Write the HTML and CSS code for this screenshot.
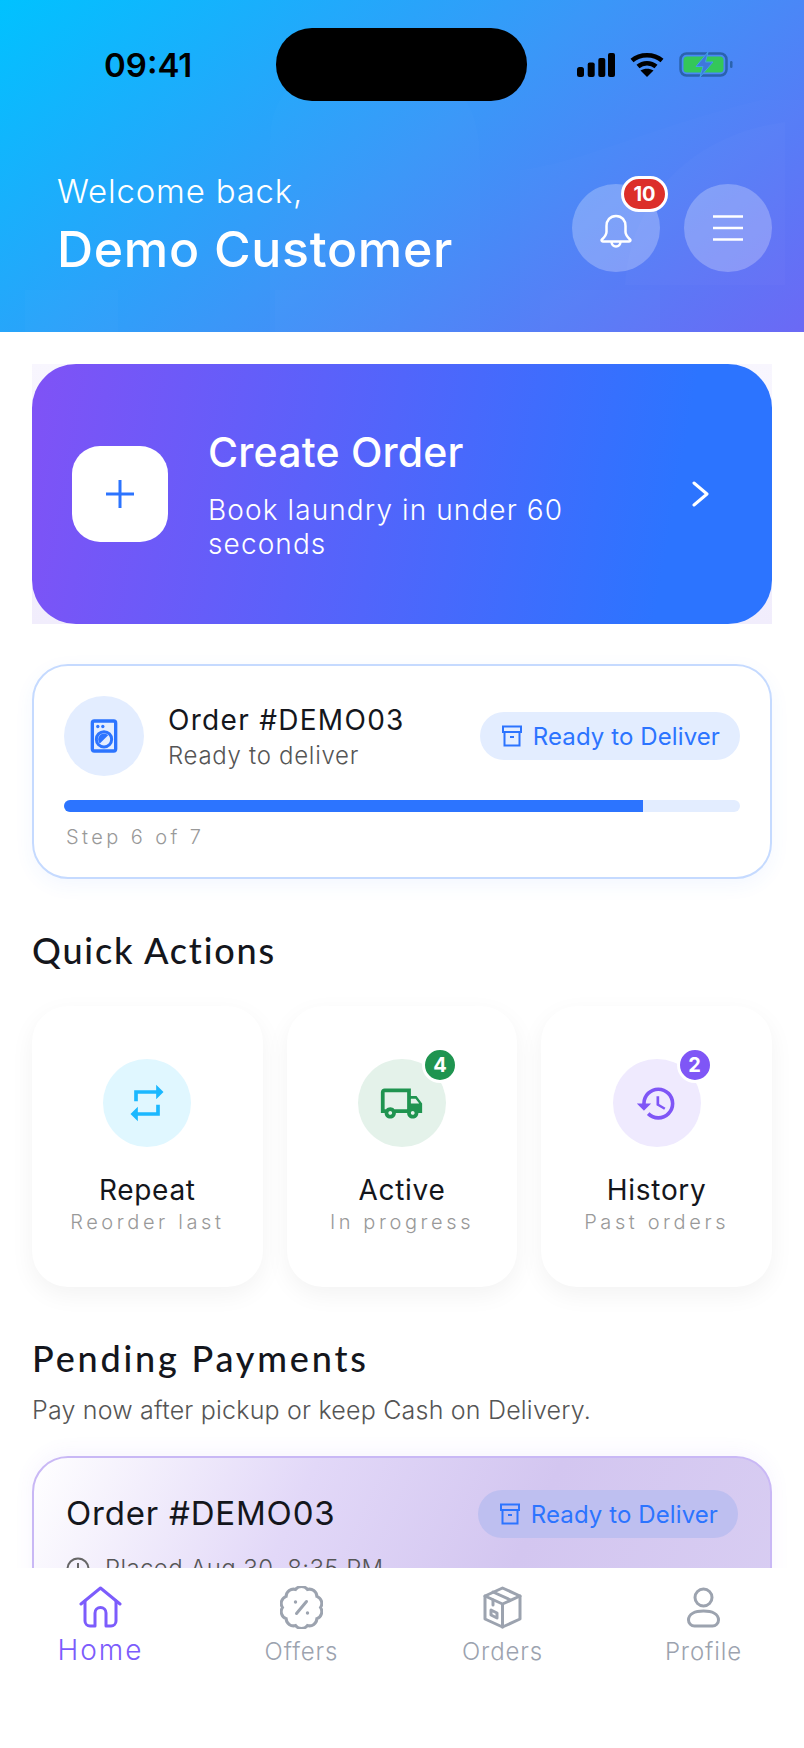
FILE: index.html
```html
<!DOCTYPE html>
<html lang="en">
<head>
    <meta charset="UTF-8">
    <meta name="viewport" content="width=device-width, initial-scale=1.0">
    <title>Customer Home</title>
    <link rel="stylesheet" href="styles.css">
</head>
<body>
    <div class="screen">
        <header class="hero">
            <svg class="hero-pattern" viewBox="0 0 804 332" preserveAspectRatio="none" fill="#fff">
                <path d="M270 332V140C270 80 320 60 380 60S480 90 480 160V332Z" opacity="0.012"/>
                <path d="M520 332V170C590 160 640 130 760 100H804V332Z" opacity="0.012"/>
                <path d="M625 285C630 200 690 135 785 122V285Z" opacity="0.02"/>
                <path d="M25 290H118V332H25ZM275 290H400V332H275ZM540 290H660V332H540Z" opacity="0.015"/>
            </svg>
            <div class="status-bar">
                <span class="clock">09:41</span>
                <div class="island"></div>
                <div class="status-icons">
                    <svg class="signal" viewBox="0 0 38 24" fill="#000">
                        <rect x="0" y="14" width="7" height="10" rx="2.5"/>
                        <rect x="10.700" y="9.500" width="7" height="14.500" rx="2"/>
                        <rect x="21.300" y="5" width="7" height="19" rx="2"/>
                        <rect x="31" y="0" width="7" height="24" rx="2"/>
                    </svg>
                    <svg class="wifi" viewBox="0 0 34 24" fill="none" stroke="#000" stroke-width="4.500">
                        <path d="M2 7.500C10 .5 24 .5 32 7.500"/>
                        <path d="M8 13.500C13 9 21 9 26 13.500"/>
                        <path d="M17 24 10.500 17.500C14.500 15 19.500 15 23.500 17.500Z" fill="#000" stroke="none"/>
                    </svg>
                    <svg class="battery" viewBox="0 0 54 25" fill="none">
                        <rect x="1.500" y="1.500" width="46" height="22" rx="6" stroke="#2a63ae" stroke-width="2.500"/>
                        <rect x="4.500" y="4.500" width="40" height="16" rx="3.500" fill="#34c759"/>
                        <rect x="51" y="9" width="2.500" height="7" rx="1.200" fill="#2a63ae"/>
                        <path d="M29 0 17 14.500H24L21 25 34 10H26.500Z" fill="#3f78dc" stroke="#3fa0e8" stroke-width="1"/>
                    </svg>
                </div>
            </div>
            <div class="hero-row">
                <div class="greeting">
                    <div class="greeting-small">Welcome back,</div>
                    <div class="greeting-name">Demo Customer</div>
                </div>
                <div class="hero-actions">
                    <button class="round-button">
                        <svg class="bell-icon" viewBox="0 0 32 34" fill="none" stroke="#fff" stroke-width="2.500" stroke-linejoin="round">
                            <path d="M16 2C10 2 6.500 6.500 6.500 12V18C6.500 21 4.500 23 2 25.500 1.200 26.300 1.700 27.500 2.800 27.500H29.200C30.300 27.500 30.800 26.300 30 25.500 27.500 23 25.500 21 25.500 18V12C25.500 6.500 22 2 16 2Z"/>
                            <path d="M11.500 27.500C11.500 30.500 13.500 32.500 16 32.500S20.500 30.500 20.500 27.500"/>
                        </svg>
                        <span class="count-badge">10</span>
                    </button>
                    <button class="round-button">
                        <svg class="menu-icon" viewBox="0 0 30 26" fill="none" stroke="#fff" stroke-width="2.500">
                            <path d="M0 1.500H30M0 13H30M0 24.500H30"/>
                        </svg>
                    </button>
                </div>
            </div>
        </header>

        <main class="content">
            <div class="create-wrap">
                <div class="create-card">
                    <div class="create-plus">
                        <svg class="plus-icon" viewBox="0 0 28 28" fill="none" stroke="#2c74ff" stroke-width="3">
                            <path d="M14 0V28M0 14H28"/>
                        </svg>
                    </div>
                    <div class="create-text">
                        <div class="create-title">Create Order</div>
                        <div class="create-sub">Book laundry in under 60 seconds</div>
                    </div>
                    <svg class="chevron" viewBox="0 0 17 26" fill="none" stroke="#fff" stroke-width="3" stroke-linecap="round" stroke-linejoin="round">
                        <path d="M2 2 15 13 2 24"/>
                    </svg>
                </div>
            </div>

            <section class="order-card">
                <div class="order-row">
                    <div class="order-icon">
                        <svg class="washer-icon" viewBox="0 0 24 24" fill="none">
                            <rect x="5" y="3" width="14" height="18" rx="1.200" stroke="#2c74ff" stroke-width="2"/>
                            <circle cx="8.300" cy="6.300" r="1" fill="#2c74ff"/>
                            <circle cx="11.300" cy="6.300" r="1" fill="#2c74ff"/>
                            <circle cx="12" cy="14" r="4.600" stroke="#2c74ff" stroke-width="1.800"/>
                            <path d="M9.500 16.500A3.500 3.500 0 0 1 14.500 11.500Z" fill="#2c74ff"/>
                        </svg>
                    </div>
                    <div class="order-text">
                        <div class="order-title">Order #DEMO03</div>
                        <div class="order-sub">Ready to deliver</div>
                    </div>
                    <span class="status-pill">
                        <svg class="pill-icon" viewBox="0 0 20 22" fill="none" stroke="#2c74ff" stroke-width="2">
                            <path d="M1 1.500H19V7H1ZM2.500 7V20.500H17.500V7M8 12H12"/>
                        </svg>
                        Ready to Deliver
                    </span>
                </div>
                <div class="progress"><div class="progress-fill" style="width: 85.7%"></div></div>
                <div class="step-text">Step 6 of 7</div>
            </section>

            <h2 class="section-title quick-title">Quick Actions</h2>
            <div class="quick-grid">
                <div class="quick-card">
                    <div class="quick-icon quick-repeat">
                        <svg viewBox="0 0 24 24" width="44" height="44" fill="#1bb8ff">
                            <path d="M7 7h10v3l4-4-4-4v3H5v6h2V7zm10 10H7v-3l-4 4 4 4v-3h12v-6h-2v4z"/>
                        </svg>
                    </div>
                    <div class="quick-label">Repeat</div>
                    <div class="quick-sub">Reorder last</div>
                </div>
                <div class="quick-card">
                    <div class="quick-icon quick-active">
                        <svg viewBox="0 0 24 24" width="45" height="45" fill="#1f9450">
                            <path d="M20 8h-3V4H3c-1.100 0-2 .9-2 2v11h2c0 1.660 1.340 3 3 3s3-1.340 3-3h6c0 1.660 1.340 3 3 3s3-1.340 3-3h2v-5l-3-4zm-.5 1.500 1.960 2.500H17V9.500h2.500zM6 18c-.55 0-1-.45-1-1s.45-1 1-1 1 .45 1 1-.45 1-1 1zm2.220-3c-.55-.61-1.330-1-2.220-1s-1.670.39-2.220 1H3V6h12v9H8.220zM18 18c-.55 0-1-.45-1-1s.45-1 1-1 1 .45 1 1-.45 1-1 1z"/>
                        </svg>
                        <span class="dot-badge dot-green">4</span>
                    </div>
                    <div class="quick-label">Active</div>
                    <div class="quick-sub">In progress</div>
                </div>
                <div class="quick-card">
                    <div class="quick-icon quick-history">
                        <svg viewBox="0 0 24 24" width="43" height="43" fill="#7f56f6">
                            <path d="M13 3a9 9 0 0 0-9 9H1l3.890 3.890.07.14L9 12H6c0-3.870 3.130-7 7-7s7 3.130 7 7-3.130 7-7 7c-1.930 0-3.680-.79-4.940-2.060l-1.420 1.420A8.954 8.954 0 0 0 13 21a9 9 0 0 0 0-18zm-1 5v5l4.280 2.540.72-1.210-3.500-2.080V8H12z"/>
                        </svg>
                        <span class="dot-badge dot-purple">2</span>
                    </div>
                    <div class="quick-label">History</div>
                    <div class="quick-sub">Past orders</div>
                </div>
            </div>

            <h2 class="section-title pending-title">Pending Payments</h2>
            <p class="pending-sub">Pay now after pickup or keep Cash on Delivery.</p>
            <section class="payment-card">
                <div class="payment-row">
                    <div class="payment-title">Order #DEMO03</div>
                    <span class="status-pill status-pill-dim">
                        <svg class="pill-icon" viewBox="0 0 20 22" fill="none" stroke="#2c74ff" stroke-width="2">
                            <path d="M1 1.500H19V7H1ZM2.500 7V20.500H17.500V7M8 12H12"/>
                        </svg>
                        Ready to Deliver
                    </span>
                </div>
                <div class="payment-meta">
                    <svg class="clock-icon" viewBox="0 0 24 24" fill="none" stroke="#666" stroke-width="2">
                        <circle cx="12" cy="12" r="10.500"/>
                        <path d="M12 6V13"/>
                    </svg>
                    Placed Aug 30, 8:35 PM
                </div>
            </section>
        </main>

        <nav class="tabbar">
            <div class="tab tab-active">
                <svg class="tab-icon" viewBox="0 0 43 43" fill="none" stroke="#7c5cfc" stroke-width="3" stroke-linecap="round" stroke-linejoin="round">
                    <path d="M2 18 21.500 2 41 18"/>
                    <path d="M6 15V35A5 5 0 0 0 11 40H16V27A5.500 5.500 0 0 1 27 27V40H32A5 5 0 0 0 37 35V15"/>
                </svg>
                <span class="tab-label">Home</span>
            </div>
            <div class="tab">
                <svg class="tab-icon" viewBox="0 0 43 43" fill="none" stroke="#9ca3af" stroke-width="3" stroke-linecap="round">
                    <path d="M40.500 21.500A7.500 7.500 0 0 1 36.870 32.670 7.500 7.500 0 0 1 27.370 39.570 7.500 7.500 0 0 1 15.630 39.570 7.500 7.500 0 0 1 6.130 32.670 7.500 7.500 0 0 1 2.500 21.500 7.500 7.500 0 0 1 6.130 10.330 7.500 7.500 0 0 1 15.630 3.430 7.500 7.500 0 0 1 27.370 3.430 7.500 7.500 0 0 1 36.870 10.330 7.500 7.500 0 0 1 40.500 21.500Z"/>
                    <path d="M26.500 15.500 16.500 27.500"/>
                    <circle cx="15.500" cy="16" r="1.700" fill="#9ca3af" stroke="none"/>
                    <circle cx="27.500" cy="27" r="1.700" fill="#9ca3af" stroke="none"/>
                </svg>
                <span class="tab-label">Offers</span>
            </div>
            <div class="tab">
                <svg class="tab-icon" viewBox="0 0 43 43" fill="none" stroke="#9ca3af" stroke-width="3" stroke-linecap="round" stroke-linejoin="round">
                    <path d="M21.500 2 39 10V33L21.500 41 4 33V10Z"/>
                    <path d="M4 10 21.500 18 39 10M21.500 18V41M12 6 29.500 14"/>
                    <path d="M12 14V19"/>
                    <path d="M10 24 16 27V32L10 29Z"/>
                </svg>
                <span class="tab-label">Orders</span>
            </div>
            <div class="tab">
                <svg class="tab-icon" viewBox="0 0 43 43" fill="none" stroke="#9ca3af" stroke-width="3">
                    <circle cx="21.500" cy="11.500" r="8.500"/>
                    <path d="M12.500 40H30.500A6 6 0 0 0 36.500 34C36.500 28 30 25 21.500 25S6.500 28 6.500 34A6 6 0 0 0 12.500 40Z"/>
                </svg>
                <span class="tab-label">Profile</span>
            </div>
        </nav>
    </div>
</body>
</html>
```

FILE: styles.css
```css
* {
    box-sizing: border-box;
}
body {
    margin: 0;
    background-color: #fff;
    font-family: Inter, 'Noto Sans', sans-serif;
    color: #14161c;
}
.screen {
    width: 804px;
    height: 1748px;
    display: flex;
    flex-direction: column;
    overflow: hidden;
}

/* header */
.hero {
    position: relative;
    flex: none;
    height: 332px;
    overflow: hidden;
    background: linear-gradient(140deg, #00c2ff 0%, #3a97f8 50%, #6a68f5 100%);
}
.hero-pattern {
    position: absolute;
    left: 0;
    top: 0;
    width: 100%;
    height: 100%;
}
.status-bar {
    position: relative;
    display: flex;
    align-items: center;
    height: 73px;
    margin-top: 28px;
    padding-left: 104px;
}
.clock {
    width: 172px;
    font-size: 33px;
    font-weight: 600;
    color: #000;
}
.island {
    width: 251px;
    height: 73px;
    border-radius: 36px;
    background-color: #000;
}
.status-icons {
    display: flex;
    align-items: center;
    margin-left: 50px;
}
.signal {
    width: 38px;
    height: 24px;
}
.wifi {
    width: 34px;
    height: 24px;
    margin-left: 15px;
}
.battery {
    width: 54px;
    height: 25px;
    margin-left: 15px;
}
.hero-row {
    position: relative;
    display: flex;
    justify-content: space-between;
    margin-top: 69px;
    padding: 0 32px 0 57px;
}
.greeting-small {
    font-size: 33px;
    font-weight: 300;
    line-height: 42px;
    letter-spacing: 0.8px;
    color: #fff;
}
.greeting-name {
    font-size: 50px;
    font-weight: 500;
    line-height: 74px;
    letter-spacing: 0.7px;
    color: #fff;
}
.hero-actions {
    display: flex;
    gap: 24px;
    margin-top: 14px;
}
.round-button {
    position: relative;
    display: flex;
    align-items: center;
    justify-content: center;
    width: 88px;
    height: 88px;
    padding: 0;
    border: none;
    border-radius: 50%;
    background-color: rgba(255, 255, 255, 0.25);
}
.bell-icon {
    width: 32px;
    height: 34px;
    margin-top: 6px;
}
.menu-icon {
    width: 30px;
    height: 26px;
}
.count-badge {
    position: absolute;
    left: 49px;
    top: -8px;
    width: 47px;
    height: 36px;
    border: 3px solid #fff;
    border-radius: 18px;
    background-color: #dc2f2a;
    color: #fff;
    font-family: Inter, sans-serif;
    font-size: 20px;
    font-weight: 700;
    line-height: 30px;
    text-align: center;
}

/* content */
.content {
    flex: 1;
    min-height: 0;
    overflow: hidden;
    padding: 32px 32px 0;
}
.create-wrap {
    background: linear-gradient(180deg, #f8f6fe 0%, #f1edfc 100%);
}
.create-card {
    display: flex;
    align-items: center;
    height: 260px;
    padding: 0 63px 0 40px;
    border-radius: 44px;
    background: linear-gradient(100deg, #8052f6 0%, #2c74ff 85%);
    color: #fff;
}
.create-plus {
    flex: none;
    display: flex;
    align-items: center;
    justify-content: center;
    width: 96px;
    height: 96px;
    border-radius: 28px;
    background-color: #fff;
}
.plus-icon {
    width: 28px;
    height: 28px;
}
.create-text {
    width: 400px;
    margin-left: 40px;
}
.create-title {
    font-size: 41px;
    font-weight: 500;
    line-height: 50px;
    letter-spacing: 0.2px;
}
.create-sub {
    margin-top: 16px;
    font-size: 28px;
    font-weight: 300;
    line-height: 34px;
    letter-spacing: 1.100px;
}
.chevron {
    width: 17px;
    height: 26px;
    margin-left: auto;
}
.order-card {
    margin-top: 40px;
    padding: 30px 30px 27px;
    border: 2px solid #c5daff;
    border-radius: 36px;
    background-color: #fff;
    box-shadow: 0 6px 20px rgba(44, 116, 255, 0.06);
}
.order-row {
    display: flex;
    align-items: center;
}
.order-icon {
    flex: none;
    display: flex;
    align-items: center;
    justify-content: center;
    width: 80px;
    height: 80px;
    border-radius: 50%;
    background-color: #e3edff;
}
.washer-icon {
    width: 40px;
    height: 40px;
}
.order-text {
    margin: 3px 0 0 24px;
}
.order-title {
    font-size: 28px;
    font-weight: 400;
    line-height: 36px;
    letter-spacing: 1.300px;
}
.order-sub {
    font-size: 24px;
    font-weight: 300;
    line-height: 36px;
    letter-spacing: 0.7px;
    color: #555;
}
.status-pill {
    display: flex;
    align-items: center;
    gap: 11px;
    height: 48px;
    margin-left: auto;
    padding: 0 20px 0 22px;
    border-radius: 24px;
    background-color: #e3edff;
    color: #2c74ff;
    font-size: 24px;
    font-weight: 400;
    letter-spacing: 0.1px;
}
.status-pill-dim {
    background-color: #bebff0;
}
.pill-icon {
    width: 20px;
    height: 22px;
}
.progress {
    height: 12px;
    margin-top: 24px;
    border-radius: 6px;
    overflow: hidden;
    background-color: #e3edff;
}
.progress-fill {
    height: 100%;
    background-color: #2c74ff;
}
.step-text {
    margin-top: 12px;
    padding-left: 2px;
    font-size: 20px;
    font-weight: 300;
    line-height: 26px;
    letter-spacing: 3.400px;
    color: #999;
}
.section-title {
    margin: 0;
    font-family: Lato, sans-serif;
    font-size: 36px;
    font-weight: 500;
    line-height: 44px;
    letter-spacing: 1.800px;
}
.quick-title {
    margin-top: 49px;
}
.quick-grid {
    display: grid;
    grid-template-columns: repeat(3, 1fr);
    gap: 24px;
    margin-top: 34px;
}
.quick-card {
    display: flex;
    flex-direction: column;
    align-items: center;
    height: 281px;
    padding-top: 53px;
    border-radius: 36px;
    background-color: #fff;
    box-shadow: 0 8px 24px rgba(0, 0, 0, 0.05);
}
.quick-icon {
    position: relative;
    display: flex;
    align-items: center;
    justify-content: center;
    width: 88px;
    height: 88px;
    border-radius: 50%;
}
.quick-repeat {
    background-color: #e0f7ff;
}
.quick-active {
    background-color: #e4f2ea;
}
.quick-history {
    background-color: #efeafe;
}
.dot-badge {
    position: absolute;
    right: -12px;
    top: -12px;
    width: 36px;
    height: 36px;
    border: 3px solid #fff;
    border-radius: 50%;
    color: #fff;
    font-size: 20px;
    font-weight: 700;
    line-height: 30px;
    text-align: center;
}
.dot-green {
    background-color: #1f9450;
}
.dot-purple {
    background-color: #7f56f6;
}
.quick-label {
    margin-top: 25px;
    font-size: 28px;
    font-weight: 400;
    line-height: 36px;
    letter-spacing: 0.7px;
}
.quick-sub {
    margin-top: 1px;
    font-size: 20px;
    font-weight: 300;
    line-height: 26px;
    letter-spacing: 3.600px;
    color: #999;
}
.pending-title {
    margin-top: 49px;
    letter-spacing: 2.800px;
}
.pending-sub {
    margin: 13px 0 0;
    font-size: 25px;
    font-weight: 300;
    line-height: 34px;
    letter-spacing: 0.2px;
    color: #555;
}
.payment-card {
    margin-top: 29px;
    padding: 32px 32px 40px 32px;
    border: 2px solid #c9b8f5;
    border-radius: 36px;
    background: linear-gradient(115deg, #ffffff 0%, #e2d8f8 35%, #d3c6f0 65%, #d8cdf2 100%);
    box-shadow: 0 -4px 20px rgba(127, 86, 246, 0.06);
}
.payment-row {
    display: flex;
    align-items: center;
}
.payment-title {
    margin-bottom: 2px;
    font-size: 33px;
    font-weight: 400;
    letter-spacing: 0.8px;
}
.payment-meta {
    display: flex;
    align-items: center;
    gap: 15px;
    margin-top: 14px;
    font-size: 24px;
    font-weight: 300;
    line-height: 34px;
    letter-spacing: 0.4px;
    color: #555;
}
.clock-icon {
    width: 24px;
    height: 24px;
}

/* bottom nav */
.tabbar {
    flex: none;
    display: flex;
    height: 180px;
    padding-top: 18px;
    background-color: #fff;
}
.tab {
    flex: 1;
    display: flex;
    flex-direction: column;
    align-items: center;
}
.tab-icon {
    width: 43px;
    height: 43px;
}
.tab-label {
    margin-top: 3px;
    font-size: 24px;
    font-weight: 300;
    line-height: 40px;
    letter-spacing: 0.9px;
    color: #9ca3af;
}
.tab-active .tab-label {
    font-size: 28px;
    line-height: 36px;
    letter-spacing: 2px;
    color: #7c5cfc;
}
```
